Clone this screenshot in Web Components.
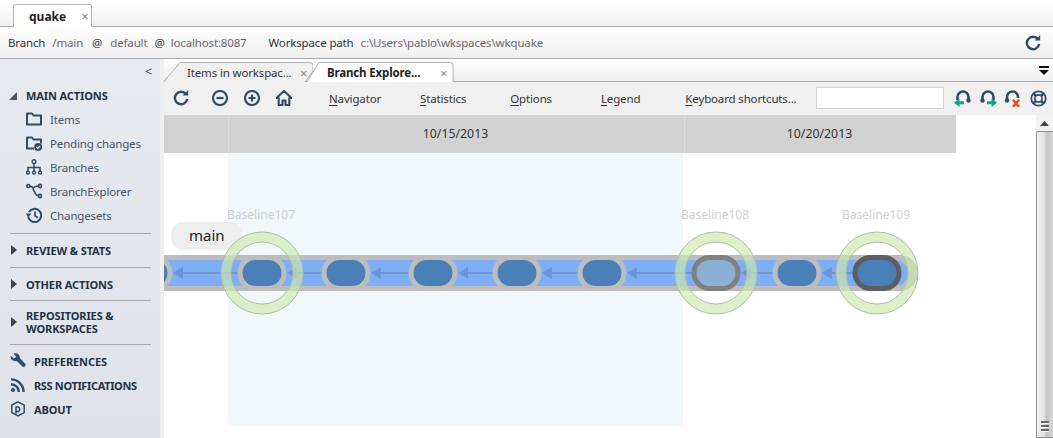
<!DOCTYPE html>
<html>
<head>
<meta charset="utf-8">
<style>
    html, body { margin: 0; height: 100%; overflow: hidden; }
    body { font: 11.5px "Noto Sans", "Open Sans", sans-serif; letter-spacing: -.15px; color: #333; background: #fff; }
    ps-shell { height: 438px; }
</style>
</head>
<body>
<ps-shell>
    <ps-top-tabs slot="top"></ps-top-tabs>
    <ps-info-bar slot="top"></ps-info-bar>
    <ps-sidebar slot="side"></ps-sidebar>
    <ps-doc-tabs slot="main"></ps-doc-tabs>
    <ps-toolbar slot="main"></ps-toolbar>
    <ps-explorer slot="main"></ps-explorer>
</ps-shell>

<script>
const NAVY = '#2f4d69';

const ICONS = {
    refresh: `<path d="M13 4.2A6.2 6.2 0 1 0 14.2 9" fill="none" stroke="${NAVY}" stroke-width="2.4"/><path d="M9.6 5.6h5.6V0z" fill="${NAVY}"/>`,
    minus: `<circle cx="8" cy="8" r="7" fill="none" stroke="${NAVY}" stroke-width="2.2"/><path d="M4.5 8h7" stroke="${NAVY}" stroke-width="2.2"/>`,
    plus: `<circle cx="8" cy="8" r="7" fill="none" stroke="${NAVY}" stroke-width="2.2"/><path d="M4.5 8h7M8 4.5v7" stroke="${NAVY}" stroke-width="2.2"/>`,
    home: `<path d="M8 1L.5 8h2.2v7h3.8v-4.5h3V15h3.8V8h2.2z" fill="none" stroke="${NAVY}" stroke-width="2.1" stroke-linejoin="round"/>`,
    folder: `<path d="M1 13.5V2.5h5l1.5 2h7.5v9z" fill="none" stroke="${NAVY}" stroke-width="2" stroke-linejoin="round"/>`,
    pending: `<path d="M8 13.5H1V2.5h5l1.5 2h7.5v4" fill="none" stroke="${NAVY}" stroke-width="2" stroke-linejoin="round"/><circle cx="12.2" cy="12" r="4" fill="${NAVY}"/><path d="M10.3 12l1.4 1.4 2.4-2.6" fill="none" stroke="#fff" stroke-width="1.2"/>`,
    branches: `<circle cx="8" cy="2.6" r="1.9" fill="none" stroke="${NAVY}" stroke-width="1.4"/><path d="M8 4.5v8M2 12V8.5h12V12" fill="none" stroke="${NAVY}" stroke-width="1.6"/><g fill="none" stroke="${NAVY}" stroke-width="1.4"><circle cx="2" cy="13.6" r="1.5"/><circle cx="8" cy="13.6" r="1.5"/><circle cx="14" cy="13.6" r="1.5"/></g>`,
    explorer: `<g fill="none" stroke="${NAVY}" stroke-width="1.6"><circle cx="2.3" cy="3" r="1.5"/><circle cx="14" cy="3" r="1.6"/><circle cx="14" cy="13" r="1.6"/><path d="M3.8 3.4C8 3.6 6.5 5 8 8c1 2.5 2.5 4.4 4.4 4.8M7 5c1.5-1.4 3-2 5.4-2"/></g>`,
    changesets: `<path d="M3 5A6.6 6.6 0 1 1 2.2 10" fill="none" stroke="${NAVY}" stroke-width="2"/><path d="M0 6.5h5.5L2 10.5z" fill="${NAVY}"/><path d="M9 4.5V9l3 1.6" fill="none" stroke="${NAVY}" stroke-width="1.7"/>`,
    wrench: `<path d="M.8 2.8L4 5.4l2.2-1.7L3.4.6C6.8-.9 10.4 1.4 9.8 5l5.6 6c1 1.4-1 4-2.7 2.8L6.8 8C3 8.8-.2 6.4.8 2.8z" fill="${NAVY}"/>`,
    rss: `<circle cx="3" cy="13" r="2.1" fill="${NAVY}"/><path d="M1 7.2A7.8 7.8 0 0 1 8.8 15M1 2.4A12.6 12.6 0 0 1 13.6 15" fill="none" stroke="${NAVY}" stroke-width="2.4"/>`,
    about: `<path d="M8 .8l6.2 3.2v7.6L8 15 1.8 11.6V4z" fill="none" stroke="${NAVY}" stroke-width="1.5"/><path d="M6 13V6.2a2.5 2.5 0 1 1 2.5 4.4H6" fill="none" stroke="${NAVY}" stroke-width="1.5"/>`,
    locPrev: `<path d="M3.5 10V7a5.5 5.5 0 0 1 11 0v2.5" fill="none" stroke="${NAVY}" stroke-width="2.6"/><circle cx="14.5" cy="10.5" r="2.2" fill="${NAVY}"/><path d="M0 12.8l5.5-4.2v2.7h4.5v3H5.5V17z" fill="#10a585"/>`,
    locNext: `<path d="M2.5 9.5V7a5.5 5.5 0 0 1 11 0v3.5" fill="none" stroke="${NAVY}" stroke-width="2.6"/><circle cx="2.5" cy="10.5" r="2.2" fill="${NAVY}"/><path d="M17 12.8l-5.5-4.2v2.7H7v3h4.5V17z" fill="#10a585"/>`,
    locClear: `<path d="M3 9.5V7a5.5 5.5 0 0 1 11 0v1" fill="none" stroke="${NAVY}" stroke-width="2.6"/><circle cx="3" cy="10.5" r="2.2" fill="${NAVY}"/><path d="M9 9.8l6 7M15 9.8l-6 7" stroke="#e2501e" stroke-width="2.5"/>`,
    help: `<circle cx="8.5" cy="8.5" r="7.2" fill="none" stroke="${NAVY}" stroke-width="1.8"/><circle cx="8.5" cy="8.5" r="3.6" fill="none" stroke="${NAVY}" stroke-width="1.6"/><path d="M3.3 3.3l2.7 2.7M13.7 3.3L11 6M3.3 13.7L6 11M13.7 13.7L11 11" stroke="${NAVY}" stroke-width="2.6"/>`
};

function iconSvg(name, size = 16, box = 16) {
    return `<svg width="${size}" height="${size}" viewBox="0 0 ${box} ${box}">${ICONS[name]}</svg>`;
}

// base class: every element just stamps its template into an open root
class PsBase extends HTMLElement {
    constructor() {
        super();
        this.attachShadow({mode: 'open'});
        this.shadowRoot.innerHTML = this.render();
    }
    render() { return '<slot></slot>'; }
}

class PsShell extends PsBase {
    render() {
        return `
            <style>
                :host { display: grid; grid-template-columns: 160px 893px; grid-template-rows: auto 1fr; }
                .top { grid-column: 1 / 3; display: block; }
                .side { display: block; }
                .main { display: flex; flex-direction: column; min-width: 0; background: #efefef; padding-left: 4px; }
            </style>
            <div class="top"><slot name="top"></slot></div>
            <div class="side"><slot name="side"></slot></div>
            <div class="main"><slot name="main"></slot></div>
        `;
    }
}

class PsTopTabs extends PsBase {
    render() {
        return `
            <style>
                :host { display: flex; height: 26px; padding-left: 13px;
                    background: linear-gradient(#fff, #f1f1f1); border-bottom: 1px solid #a9a9a9; align-items: flex-end; }
                .tab { width: 79px; height: 23px; box-sizing: border-box; margin-bottom: -1px; background: #fff;
                    border: 1px solid #b4b4b4; border-bottom: 0; border-radius: 3px 3px 0 0;
                    display: flex; align-items: center; padding-left: 15px; font-weight: 700; font-size: 12px; letter-spacing: 0; color: #222; }
                .x { margin-left: 15px; color: #888; font-weight: 400; font-size: 13px; }
            </style>
            <div class="tab">quake<span class="x">×</span></div>
        `;
    }
}

class PsInfoBar extends PsBase {
    render() {
        return `
            <style>
                :host { display: flex; align-items: center; height: 31px; padding: 0 12px 0 8px;
                    background: linear-gradient(#fff, #efefef); border-bottom: 1px solid #a9a9a9; color: #333; }
                .v { color: #6b6670; }
                span { white-space: nowrap; }
                svg { margin-left: auto; }
            </style>
            <span>Branch</span><span class="v" style="margin-left:7px">/main</span>
            <span style="margin-left:9px">@</span><span class="v" style="margin-left:8px">default</span>
            <span style="margin-left:7px">@</span><span class="v" style="margin-left:6px">localhost:8087</span>
            <span style="margin-left:22px">Workspace path</span><span class="v" style="margin-left:7px">c:\\Users\\pablo\\wkspaces\\wkquake</span>
            ${iconSvg('refresh')}
        `;
    }
}

class PsSideGroup extends PsBase {
    render() {
        const open = this.hasAttribute('open');
        const arrow = open
            ? '<polygon points="8,5 8,13 0,13" fill="#555"/>'
            : '<polygon points="2,4 8,9 2,14" fill="#444"/>';
        return `
            <style>
                :host { display: flex; align-items: center; padding-left: 9px; font-weight: 700; font-size: 11px;
                    line-height: 13px; color: #1f3347; min-height: 24px; letter-spacing: -.1px; }
                svg { flex: none; margin-right: 8px; }
            </style>
            <svg width="9" height="18" viewBox="0 0 9 18">${arrow}</svg>
            <div><slot></slot></div>
        `;
    }
}

class PsSideItem extends PsBase {
    render() {
        return `
            <style>
                :host { display: flex; align-items: center; height: 24px; padding-left: 26px; color: #46566b; }
                svg { flex: none; margin-right: 8px; }
            </style>
            ${iconSvg(this.getAttribute('icon'))}
            <slot></slot>
        `;
    }
}

class PsSideLink extends PsBase {
    render() {
        return `
            <style>
                :host { display: flex; align-items: center; height: 24px; padding-left: 10px;
                    font-weight: 700; font-size: 11px; letter-spacing: -.1px; color: #1f3347; }
                svg { flex: none; margin-right: 8px; }
            </style>
            ${iconSvg(this.getAttribute('icon'))}
            <slot></slot>
        `;
    }
}

class PsSidebar extends PsBase {
    render() {
        return `
            <style>
                :host { display: block; background: linear-gradient(#e7eaef, #dfe3e9); height: 379px; }
                .collapse { height: 25px; padding-right: 8px; text-align: right; line-height: 25px; color: #444; font-size: 12.5px; }
                hr { border: 0; border-top: 1px solid #a6a6a6; margin: 5px 9px 4px 10px; }
                .main-head { min-height: 23px; }
                .first { margin-top: 6px; }
                .tight { margin-top: 4px; }
                .repo { padding: 4px 0 4px 9px; }
            </style>
            <div class="collapse">&lt;</div>
            <ps-side-group class="main-head" open>MAIN ACTIONS</ps-side-group>
            <ps-side-item icon="folder">Items</ps-side-item>
            <ps-side-item icon="pending">Pending changes</ps-side-item>
            <ps-side-item icon="branches">Branches</ps-side-item>
            <ps-side-item icon="explorer">BranchExplorer</ps-side-item>
            <ps-side-item icon="changesets">Changesets</ps-side-item>
            <hr class="first">
            <ps-side-group>REVIEW &amp; STATS</ps-side-group>
            <hr>
            <ps-side-group>OTHER ACTIONS</ps-side-group>
            <hr class="tight">
            <ps-side-group class="repo">REPOSITORIES &amp;<br>WORKSPACES</ps-side-group>
            <hr>
            <div class="links">
                <ps-side-link icon="wrench">PREFERENCES</ps-side-link>
                <ps-side-link icon="rss" style="letter-spacing:-.35px">RSS NOTIFICATIONS</ps-side-link>
                <ps-side-link icon="about">ABOUT</ps-side-link>
            </div>
        `;
    }
}

class PsDocTabs extends PsBase {
    render() {
        return `
            <style>
                :host { display: flex; height: 23px; box-sizing: border-box; align-items: flex-end; position: relative;
                    background: linear-gradient(#fff, #eee); border-bottom: 1px solid #a9a9a9; }
                .tab { position: relative; height: 20px; margin-bottom: -1px; display: flex; align-items: center; box-sizing: border-box; }
                .tab svg.bg { position: absolute; left: 0; top: 0; }
                .tab span { position: relative; white-space: nowrap; }
                .one { width: 150px; padding-left: 24px; margin-left: -1px; }
                .two { width: 147px; padding-left: 20px; margin-left: -6px; font-weight: 700; color: #222; }
                .x { color: #888; font-weight: 400; position: absolute !important; top: 2px; font-size: 13px; }
                .more { position: absolute; right: 4px; top: 7px; }
            </style>
            <div class="tab one">
                <svg class="bg" width="150" height="20"><path d="M0.5 20L17 .5H147q3 0 3 3V9L142 20" fill="#f0f0f0" stroke="#b0b0b0"/></svg>
                <span>Items in workspac...</span><span class="x" style="left:137px">×</span>
            </div>
            <div class="tab two">
                <svg class="bg" width="147" height="20"><path d="M0 20L12 .5H143q3 0 3 3V20" fill="#fff" stroke="#b0b0b0"/></svg>
                <span>Branch Explore...</span><span class="x" style="left:133px">×</span>
            </div>
            <svg class="more" width="10" height="10" viewBox="0 0 10 10"><path d="M0 0h10v2H0z" fill="#111"/><path d="M0 4h10L5 9z" fill="#111"/></svg>
        `;
    }
}

class PsMenu extends PsBase {
    render() {
        return `
            <style>
                :host { display: inline-block; flex: none; white-space: nowrap; color: #333; }
                u { text-underline-offset: 2px; }
            </style>
            <u>${this.getAttribute('key')}</u><slot></slot>
        `;
    }
}

class PsToolbar extends PsBase {
    render() {
        return `
            <style>
                :host { display: flex; align-items: center; height: 33px; box-sizing: border-box; padding: 0 0 1px 9px;
                    background: #f0f0f0; }
                svg { flex: none; display: block; }
                span { flex: none; display: block; }
                input { flex: none; width: 128px; height: 22px; box-sizing: border-box; border: 1px solid #d3d6dc; background: #fff; padding: 0; }
            </style>
            ${iconSvg('refresh')}
            <span style="width:23px"></span>${iconSvg('minus')}
            <span style="width:16px"></span>${iconSvg('plus')}
            <span style="width:16px"></span>${iconSvg('home')}
            <ps-menu key="N" style="margin-left:37px">avigator</ps-menu>
            <ps-menu key="S" style="margin-left:39px">tatistics</ps-menu>
            <ps-menu key="O" style="margin-left:44px">ptions</ps-menu>
            <ps-menu key="L" style="margin-left:49px">egend</ps-menu>
            <ps-menu key="K" style="margin-left:45px">eyboard shortcuts...</ps-menu>
            <input style="margin-left:19px">
            <span style="margin-left:10px">${iconSvg('locPrev', 17, 17)}</span>
            <span style="margin-left:9px">${iconSvg('locNext', 17, 17)}</span>
            <span style="margin-left:7px">${iconSvg('locClear', 17, 17)}</span>
            <span style="margin-left:9px">${iconSvg('help', 17, 17)}</span>
        `;
    }
}

class PsGraph extends PsBase {
    render() {
        const Y = 120, xs = [-16, 98, 182, 269, 353, 438, 552, 633, 713];
        let arrows = '', nodes = '';
        xs.forEach((x, i) => {
            const hl = i === 6 ? ['#8bb0d3', '#808080'] : i === 8 ? ['#4a80b8', '#5e5e5e'] : ['#4a80b8', '#bdbdbd'];
            // 39x26 fill plus a 5px ring outside it
            nodes += `<rect x="${x - 22}" y="${Y - 15.5}" width="44" height="31" rx="15.5" fill="${hl[0]}" stroke="${hl[1]}" stroke-width="5"/>`;
            if (i > 0) {
                const from = xs[i - 1] + 25;
                const to = x - 24;
                arrows += `<path d="M${from + 10} ${Y}H${to}" stroke="#7097cc" stroke-width="2"/><path d="M${from} ${Y}l10 -6v12z" fill="#6b95d6"/>`;
            }
        });
        const rings = [98, 552, 713].map(x =>
            `<circle cx="${x}" cy="${Y}" r="36" fill="none" stroke="#cbe9ad" stroke-opacity=".66" stroke-width="10"/>
             <circle cx="${x}" cy="${Y}" r="41" fill="none" stroke="#b2bbaa" stroke-width="1"/>
             <circle cx="${x}" cy="${Y}" r="31" fill="none" stroke="#b2bbaa" stroke-width="1"/>`).join('');
        const labels = [[63, 'Baseline107'], [517, 'Baseline108'], [678, 'Baseline109']]
            .map(l => `<text x="${l[0]}" y="66" font-size="12" fill="#cfcfcf">${l[1]}</text>`).join('');
        return `
            <style>
                :host { display: block; position: absolute; left: 0; top: 38px; }
                svg { display: block; font-family: "Noto Sans", "Open Sans", sans-serif; letter-spacing: 0; }
            </style>
            <svg width="872" height="285" viewBox="0 0 872 285">
                <rect x="-20" y="102" width="774" height="36" rx="18" fill="#bdbdbd"/>
                <rect x="-20" y="107" width="764" height="26" rx="13" fill="#7eaef5"/>
                ${arrows}${nodes}
                ${labels}
                <rect x="7" y="69" width="71" height="28" rx="12" fill="#eeeeee"/>
                <text x="25" y="88" font-size="15" fill="#222">main</text>
                ${rings}
            </svg>
        `;
    }
}

class PsExplorer extends PsBase {
    render() {
        return `
            <style>
                :host { display: flex; flex: 1; min-height: 0; }
                .canvas { position: relative; flex: 1; background: #fff; overflow: hidden; }
                .dates { display: grid; grid-template-columns: 64px 456px 272px; width: 792px; height: 38px; background: #d2d2d2; }
                .dates div { display: flex; align-items: center; justify-content: center; color: #333; padding: 0 2px 2px 0;
                    font-size: 12.3px; letter-spacing: 0; border-left: 1px solid #dcdcdc; }
                .dates div:first-child { border-left: 0; }
                .band { position: absolute; left: 64px; top: 38px; width: 455px; height: 273px; background: #f0f8fa; }
                .bar { width: 17px; flex: none; display: flex; flex-direction: column; background: #f2f2f2; }
                .up { height: 16px; display: flex; align-items: center; justify-content: center; }
                .thumb { flex: 1; border: 1px solid #8f8f8f; border-right: 0; border-radius: 2px 0 0 0;
                    background: linear-gradient(90deg, #f4f4f4, #e2e2e2 45%, #c4c4c4 60%, #d6d6d6);
                    display: flex; flex-direction: column; justify-content: flex-end; align-items: center; padding-bottom: 5px; }
                .grip { width: 8px; height: 2px; background: #666; border-bottom: 1px solid #fff; margin-top: 1px; }
            </style>
            <div class="canvas">
                <div class="dates"><div></div><div>10/15/2013</div><div>10/20/2013</div></div>
                <div class="band"></div>
                <ps-graph></ps-graph>
            </div>
            <div class="bar">
                <div class="up"><svg width="9" height="5"><path d="M0 5L4.5 0 9 5z" fill="#444"/></svg></div>
                <div class="thumb"><i class="grip"></i><i class="grip"></i><i class="grip"></i></div>
            </div>
        `;
    }
}

customElements.define('ps-shell', PsShell);
customElements.define('ps-top-tabs', PsTopTabs);
customElements.define('ps-info-bar', PsInfoBar);
customElements.define('ps-side-group', PsSideGroup);
customElements.define('ps-side-item', PsSideItem);
customElements.define('ps-side-link', PsSideLink);
customElements.define('ps-sidebar', PsSidebar);
customElements.define('ps-doc-tabs', PsDocTabs);
customElements.define('ps-menu', PsMenu);
customElements.define('ps-toolbar', PsToolbar);
customElements.define('ps-graph', PsGraph);
customElements.define('ps-explorer', PsExplorer);
</script>
</body>
</html>
